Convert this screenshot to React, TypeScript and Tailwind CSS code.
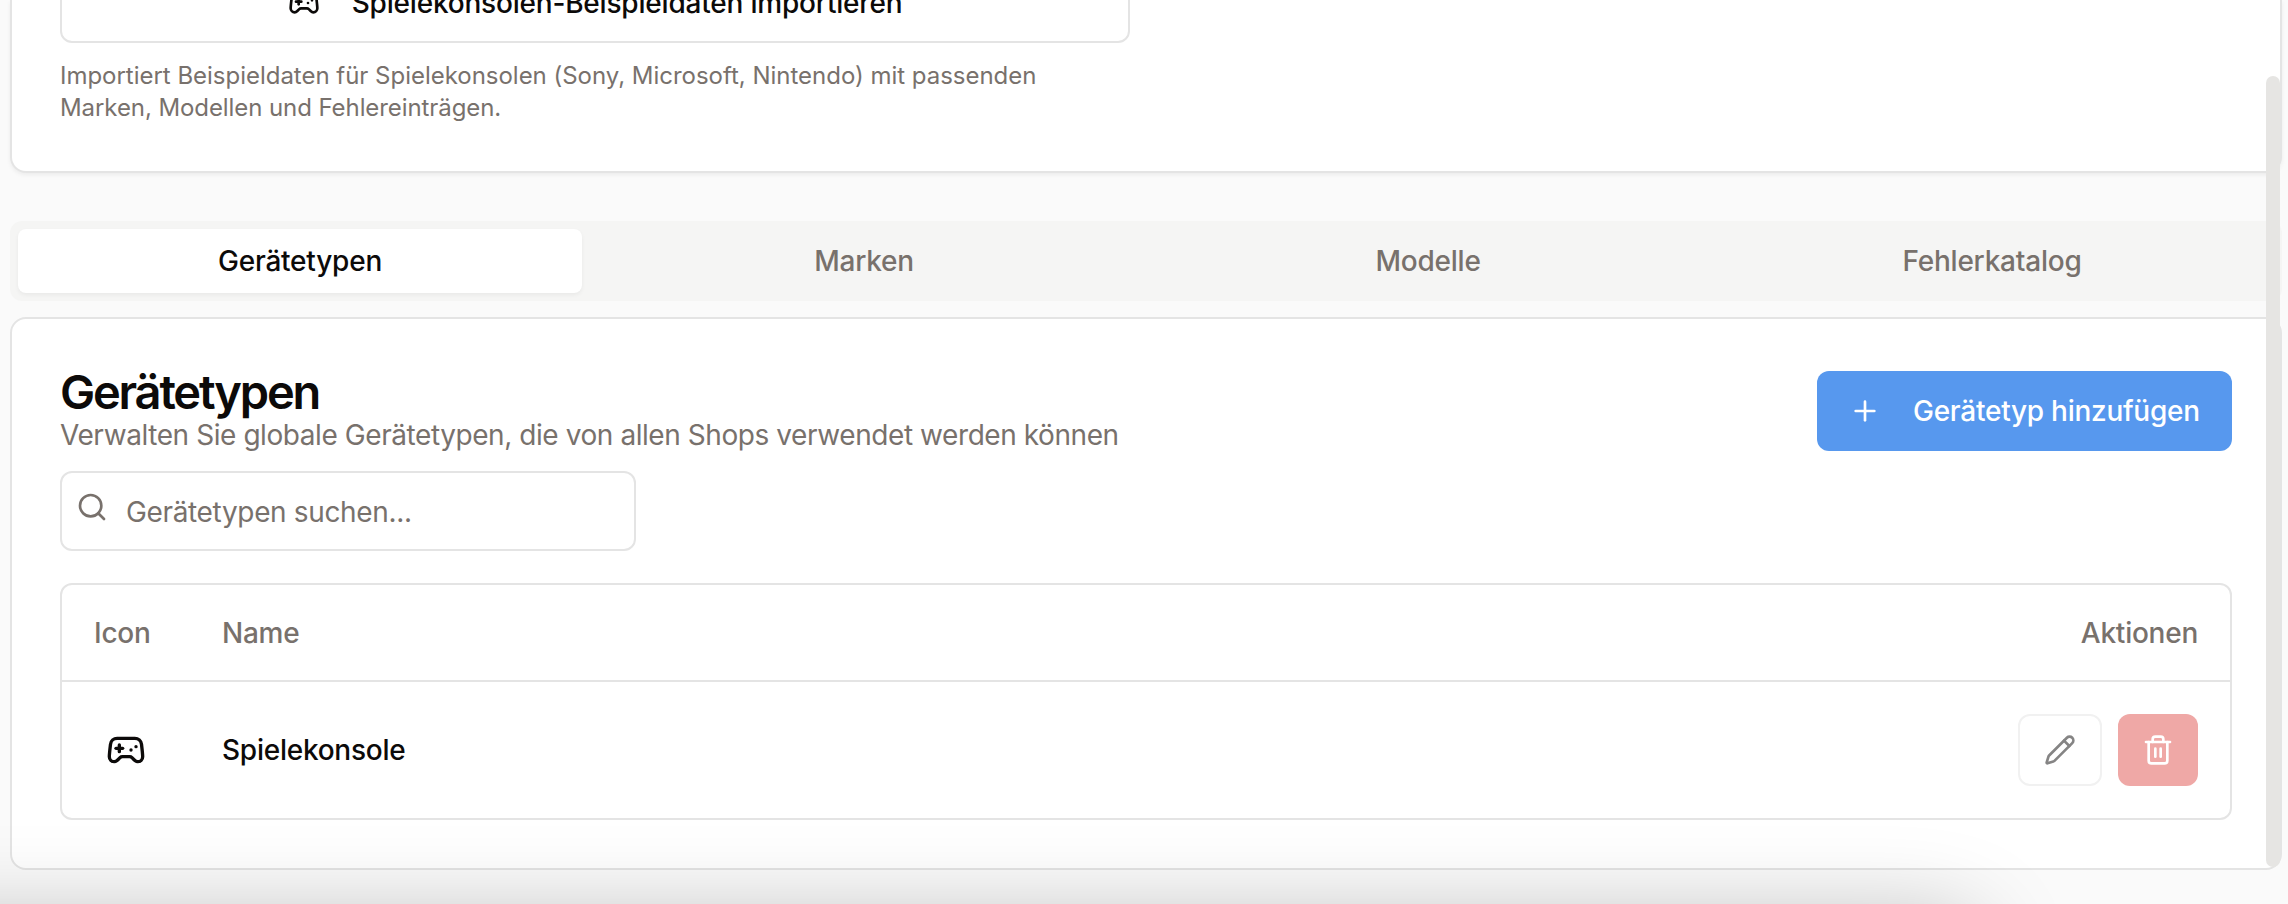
import { Gamepad2, Pencil, Plus, Search, Trash2 } from "lucide-react";

const tabs = ["Gerätetypen", "Marken", "Modelle", "Fehlerkatalog"];

function ImportCard() {
  return (
    <section className="h-[173px] shrink-0 rounded-b-[16px] border-2 border-t-0 border-[#e4e4e4] bg-white px-12 shadow-[0_2px_4px_rgba(0,0,0,0.06)]">
      <div className="w-[1070px]">
        <button className="-mt-[37px] flex h-20 w-full items-center justify-center gap-8 rounded-[12px] border-2 border-[#e4e4e4] bg-white text-[28px] font-medium tracking-[-0.2px] text-[#0c0a09]">
          <Gamepad2 size={32} />
          <span className="whitespace-nowrap">Spielekonsolen-Beispieldaten importieren</span>
        </button>
        <p className="mt-[17px] text-[24px] leading-8 tracking-[-0.02px] text-[#78716c]">
          <span className="whitespace-nowrap">Importiert Beispieldaten für Spielekonsolen (Sony, Microsoft, Nintendo) mit passenden</span>
          <br />
          <span className="whitespace-nowrap tracking-[-0.08px]">Marken, Modellen und Fehlereinträgen.</span>
        </p>
      </div>
    </section>
  );
}

function TabBar() {
  return (
    <nav className="mt-12 grid h-20 shrink-0 grid-cols-4 rounded-[12px] bg-[#f5f5f4] p-2">
      {tabs.map((tab, i) => (
        <button
          key={tab}
          className={
            i === 0
              ? "rounded-[8px] bg-white text-[28px] font-medium tracking-[-0.22px] text-[#0c0a09] shadow-[0_2px_4px_rgba(0,0,0,0.05)]"
              : "text-[28px] font-medium tracking-[-0.22px] text-[#78716c]"
          }
        >
          <span>{tab}</span>
        </button>
      ))}
    </nav>
  );
}

function DeviceTypes() {
  return (
    <section className="mt-4 h-[553px] shrink-0 rounded-[16px] border-2 border-[#e4e4e4] bg-white px-12 pt-12">
      <header className="flex h-[104px] items-start justify-between">
        <div>
          <h2 className="text-[47px] leading-[49px] -mb-px font-semibold tracking-[-2.2px] text-[#0c0a09]"><span>Gerätetypen</span></h2>
          <p className="text-[28px] leading-10 tracking-[-0.43px] text-[#78716c]">
            <span className="whitespace-nowrap">Verwalten Sie globale Gerätetypen, die von allen Shops verwendet werden können</span>
          </p>
        </div>
        <button className="mt-1 flex h-20 w-[415px] items-center gap-8 rounded-[12px] bg-[#5798ee] pl-8 text-[28px] font-medium tracking-[-0.26px] text-white">
          <Plus size={32} />
          <span className="whitespace-nowrap">Gerätetyp hinzufügen</span>
        </button>
      </header>
      <div className="flex h-20 w-[576px] rounded-[12px] border-2 border-[#e4e4e4] pl-[14px]">
        <Search size={32} className="mt-[18px] text-[#78716c]" />
        <span className="ml-[18px] text-[28px] leading-[78px] tracking-[-0.35px] text-[#78716c]">Gerätetypen suchen...</span>
      </div>
      <div className="mt-8 rounded-[12px] border-2 border-[#e4e4e4]">
        <div className="flex h-[97px] items-center border-b-2 border-[#e4e4e4] px-8 text-[28px] font-medium tracking-[-0.25px] text-[#78716c]">
          <div className="w-32"><span>Icon</span></div>
          <div className="grow"><span>Name</span></div>
          <div><span>Aktionen</span></div>
        </div>
        <div className="flex h-[136px] items-center px-8 text-[28px] tracking-[-0.25px] text-[#0c0a09]">
          <div className="w-32 pl-3"><Gamepad2 size={40} /></div>
          <div className="grow font-medium"><span>Spielekonsole</span></div>
          <div className="flex gap-4">
            <button className="flex h-[72px] w-[84px] items-center justify-center rounded-[12px] border-2 border-[#f1f1f1] text-[#858484]">
              <Pencil size={32} />
            </button>
            <button className="flex h-[72px] w-20 items-center justify-center rounded-[12px] bg-[#efa8a6] text-white">
              <Trash2 size={32} />
            </button>
          </div>
        </div>
      </div>
    </section>
  );
}

export default function App() {
  return (
    <main className="relative flex h-[904px] w-[2288px] flex-col overflow-hidden bg-[#fafafa] pr-[6px] pl-[10px] font-['Inter',sans-serif]">
      <ImportCard />
      <TabBar />
      <DeviceTypes />
      <div className="absolute top-[76px] left-[2266px] h-[791px] w-[14px] rounded-full bg-[#e6e5e3]" />
      <div className="absolute top-[920px] -left-40 h-40 w-[2140px] rounded-[40px] shadow-[0_0_90px_rgba(0,0,0,0.25)]" />
    </main>
  );
}
